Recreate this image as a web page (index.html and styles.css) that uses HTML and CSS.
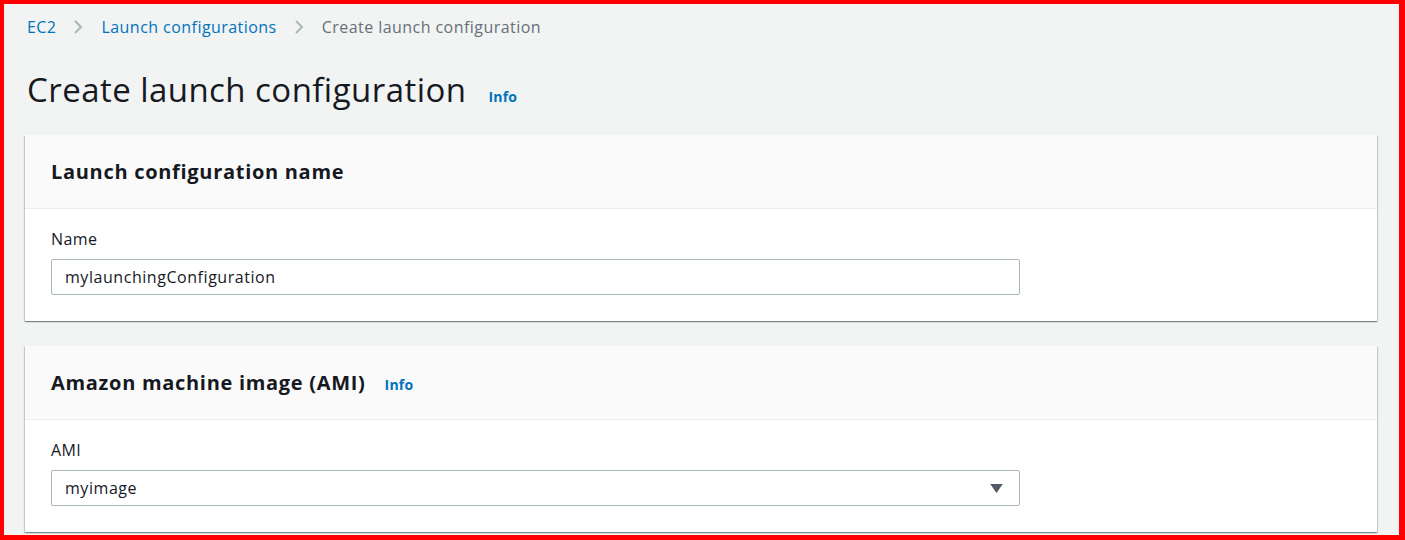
FILE: index.html
```html
<!DOCTYPE html>
<html>
<head>
    <link rel="stylesheet" href="styles.css">
</head>
<body>
<div class="frame">
    <div class="page">
        <nav class="breadcrumbs">
            <a class="crumbLink">EC2</a>
            <svg class="chevron" viewBox="0 0 16 16"><polyline points="5,2 11,8 5,14"></polyline></svg>
            <a class="crumbLink">Launch configurations</a>
            <svg class="chevron" viewBox="0 0 16 16"><polyline points="5,2 11,8 5,14"></polyline></svg>
            <span class="crumbCurrent">Create launch configuration</span>
        </nav>
        <div class="pageHeader">
            <h1 class="pageTitle">Create launch configuration</h1>
            <a class="infoLink">Info</a>
        </div>

        <div class="card">
            <div class="cardHeader">
                <h2 class="cardTitle">Launch configuration name</h2>
            </div>
            <div class="cardBody">
                <div class="fieldLabel">Name</div>
                <div class="textInput">mylaunchingConfiguration</div>
            </div>
        </div>

        <div class="card">
            <div class="cardHeader">
                <h2 class="cardTitle">Amazon machine image (AMI)</h2>
                <a class="infoLink small">Info</a>
            </div>
            <div class="cardBody">
                <div class="fieldLabel">AMI</div>
                <div class="textInput selectInput">
                    <span>myimage</span>
                    <svg class="caret" viewBox="0 0 14 10"><polygon points="0,0 14,0 7,10"></polygon></svg>
                </div>
            </div>
        </div>
    </div>
</div>
</body>
</html>
```

FILE: styles.css
```css
body {
    margin: 0;
    font-family: "Open Sans", "Noto Sans", sans-serif;
    color: #16191f;
}
.frame {
    width: 1405px;
    height: 540px;
    box-sizing: border-box;
    border-style: solid;
    border-color: #ff0000;
    border-width: 4px 6px 5px 4px;
    background-color: #f2f3f3;
    overflow: hidden;
}
.page {
    padding: 0 22px 0 21px;
}
.breadcrumbs {
    display: flex;
    align-items: center;
    padding-top: 11px;
    height: 24px;
    font-size: 16px;
    line-height: 24px;
    letter-spacing: 0.45px;
}
.crumbLink {
    color: #0073bb;
}
.crumbCurrent {
    color: #687078;
}
.breadcrumbs > :first-child {
    margin-left: 2px;
}
.chevron {
    width: 16px;
    height: 16px;
    margin: 0 15px 0 14px;
    fill: none;
    stroke: #aab7b8;
    stroke-width: 2;
}
.pageHeader {
    display: flex;
    align-items: baseline;
    margin: 31px 0 25px 2px;
    height: 40px;
}
.pageTitle {
    margin: 0;
    font-size: 33px;
    font-weight: 400;
    line-height: 40px;
    letter-spacing: 0.45px;
}
.infoLink {
    margin-left: 22px;
    color: #0073bb;
    font-size: 14px;
    font-weight: 700;
    letter-spacing: 0.2px;
}
.infoLink.small {
    margin-left: 19px;
}
.card {
    background-color: #ffffff;
    margin-bottom: 25px;
    box-shadow: 0 1px 1px 0 rgba(0,28,36,0.3), 1px 1px 1px 0 rgba(0,28,36,0.15), -1px 1px 1px 0 rgba(0,28,36,0.15);
}
.cardHeader {
    display: flex;
    align-items: baseline;
    background-color: #fafafa;
    border-bottom: 1px solid #eaeded;
    padding: 24px 26px 24px 26px;
    height: 25px;
}
.cardTitle {
    margin: 0;
    font-size: 20px;
    font-weight: 700;
    line-height: 25px;
    letter-spacing: 0.7px;
}
.cardBody {
    padding: 19px 26px 26px 26px;
}
.fieldLabel {
    font-size: 16px;
    line-height: 22px;
    margin-bottom: 9px;
    letter-spacing: 0.4px;
}
.textInput {
    display: flex;
    align-items: center;
    justify-content: space-between;
    width: 969px;
    height: 36px;
    box-sizing: border-box;
    padding: 0 16px 0 13px;
    border: 1px solid #aab7b8;
    border-radius: 2px;
    font-size: 16px;
    letter-spacing: 0.55px;
}
.caret {
    width: 13px;
    height: 9px;
    fill: #545b64;
}
```
